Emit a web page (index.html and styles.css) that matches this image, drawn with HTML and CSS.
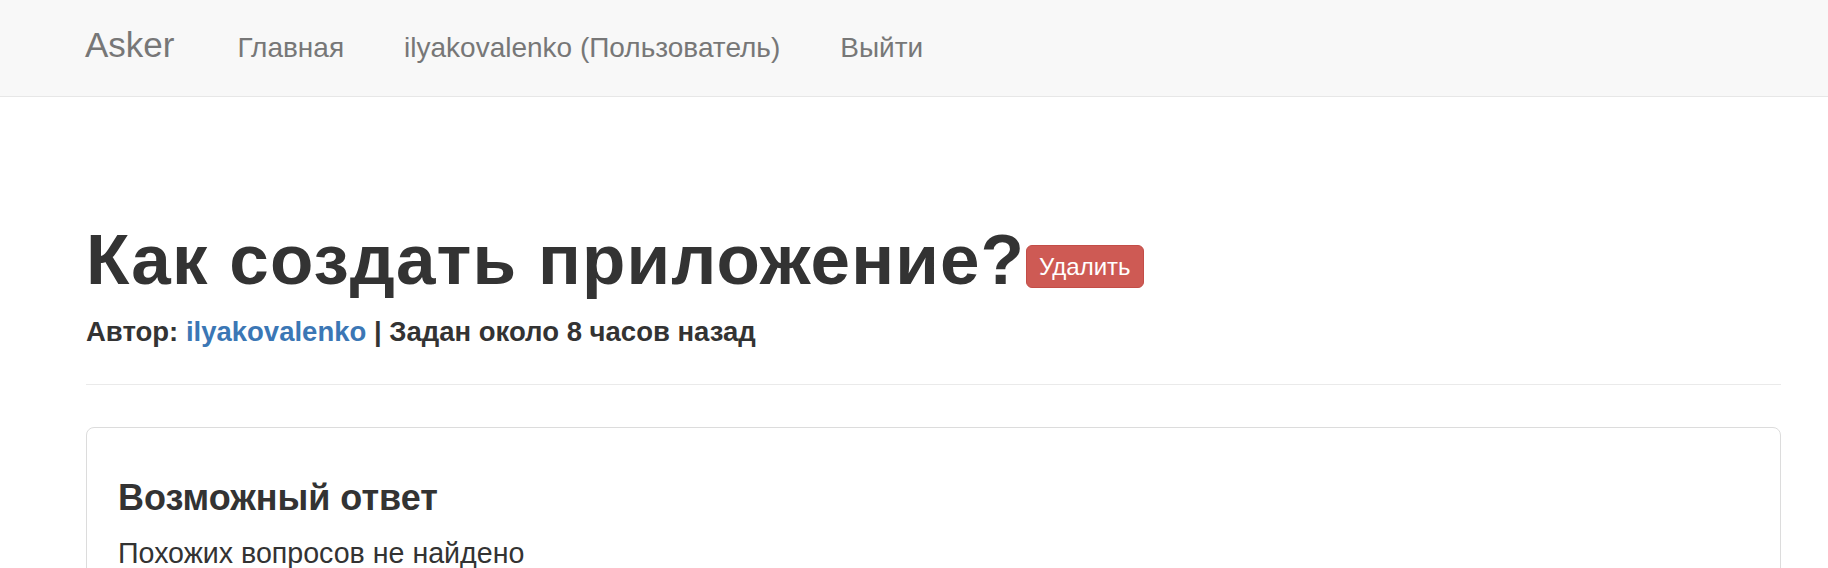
FILE: index.html
```html
<!DOCTYPE html>
<html lang="ru">
<head>
<meta charset="utf-8">
<title>Asker</title>
<link rel="stylesheet" href="styles.css">
</head>
<body>
<nav class="navbar">
  <div class="navbar-inner">
    <a class="brand" href="#">Asker</a>
    <ul class="nav">
      <li><a href="#">Главная</a></li>
      <li><a href="#">ilyakovalenko (Пользователь)</a></li>
      <li><a href="#">Выйти</a></li>
    </ul>
  </div>
</nav>
<main class="container">
  <header class="page-header">
    <h1 class="title">Как создать приложение?<a class="btn-delete" href="#">Удалить</a></h1>
    <h5 class="meta">Автор: <a href="#">ilyakovalenko</a> | Задан около 8 часов назад</h5>
  </header>
  <section class="panel">
    <h4 class="panel-title">Возможный ответ</h4>
    <p class="panel-text">Похожих вопросов не найдено</p>
  </section>
</main>
</body>
</html>
```
FILE: styles.css
```css
html {
  overflow: hidden;
}
body {
  margin: 0;
  font-family: "Liberation Sans", Arial, sans-serif;
  color: #333;
  background: #fff;
}
a {
  text-decoration: none;
}
.navbar {
  background: #f8f8f8;
  border-bottom: 1px solid #e7e7e7;
  height: 96px;
}
.navbar-inner {
  display: flex;
  align-items: baseline;
  padding: 27px 0 0 85px;
}
.brand {
  color: #777;
  font-size: 35px;
  line-height: 1;
  margin-right: 63px;
}
.nav {
  display: flex;
  align-items: baseline;
  gap: 60px;
  list-style: none;
  margin: 0;
  padding: 0;
}
.nav a {
  color: #777;
  font-size: 28px;
  line-height: 1;
}
.container {
  padding: 0 47px 0 86px;
}
.page-header {
  padding-top: 125px;
  border-bottom: 1px solid #eaeaea;
  padding-bottom: 38px;
}
.title {
  margin: 0;
  font-size: 71px;
  line-height: 76px;
  font-weight: bold;
  color: #333;
  letter-spacing: 1.1px;
}
.btn-delete {
  display: inline-block;
  vertical-align: 9px;
  margin-left: 1px;
  background: #ce5a54;
  border: 1px solid #c34d47;
  border-radius: 6px;
  color: #fff;
  font-size: 24px;
  font-weight: normal;
  line-height: 35px;
  padding: 3px 12px;
  letter-spacing: 0;
}
.meta {
  margin: 19px 0 0;
  font-size: 27.5px;
  line-height: 29px;
  font-weight: bold;
  color: #333;
}
.meta a {
  color: #3b77b5;
}
.panel {
  margin-top: 42px;
  border: 1px solid #dcdcdc;
  border-radius: 8px;
  padding: 51px 31px 20px;
}
.panel-title {
  margin: 0;
  font-size: 36px;
  line-height: 38px;
  font-weight: bold;
  color: #333;
}
.panel-text {
  margin: 15px 0 0;
  font-size: 28.6px;
  line-height: 43px;
}
```
